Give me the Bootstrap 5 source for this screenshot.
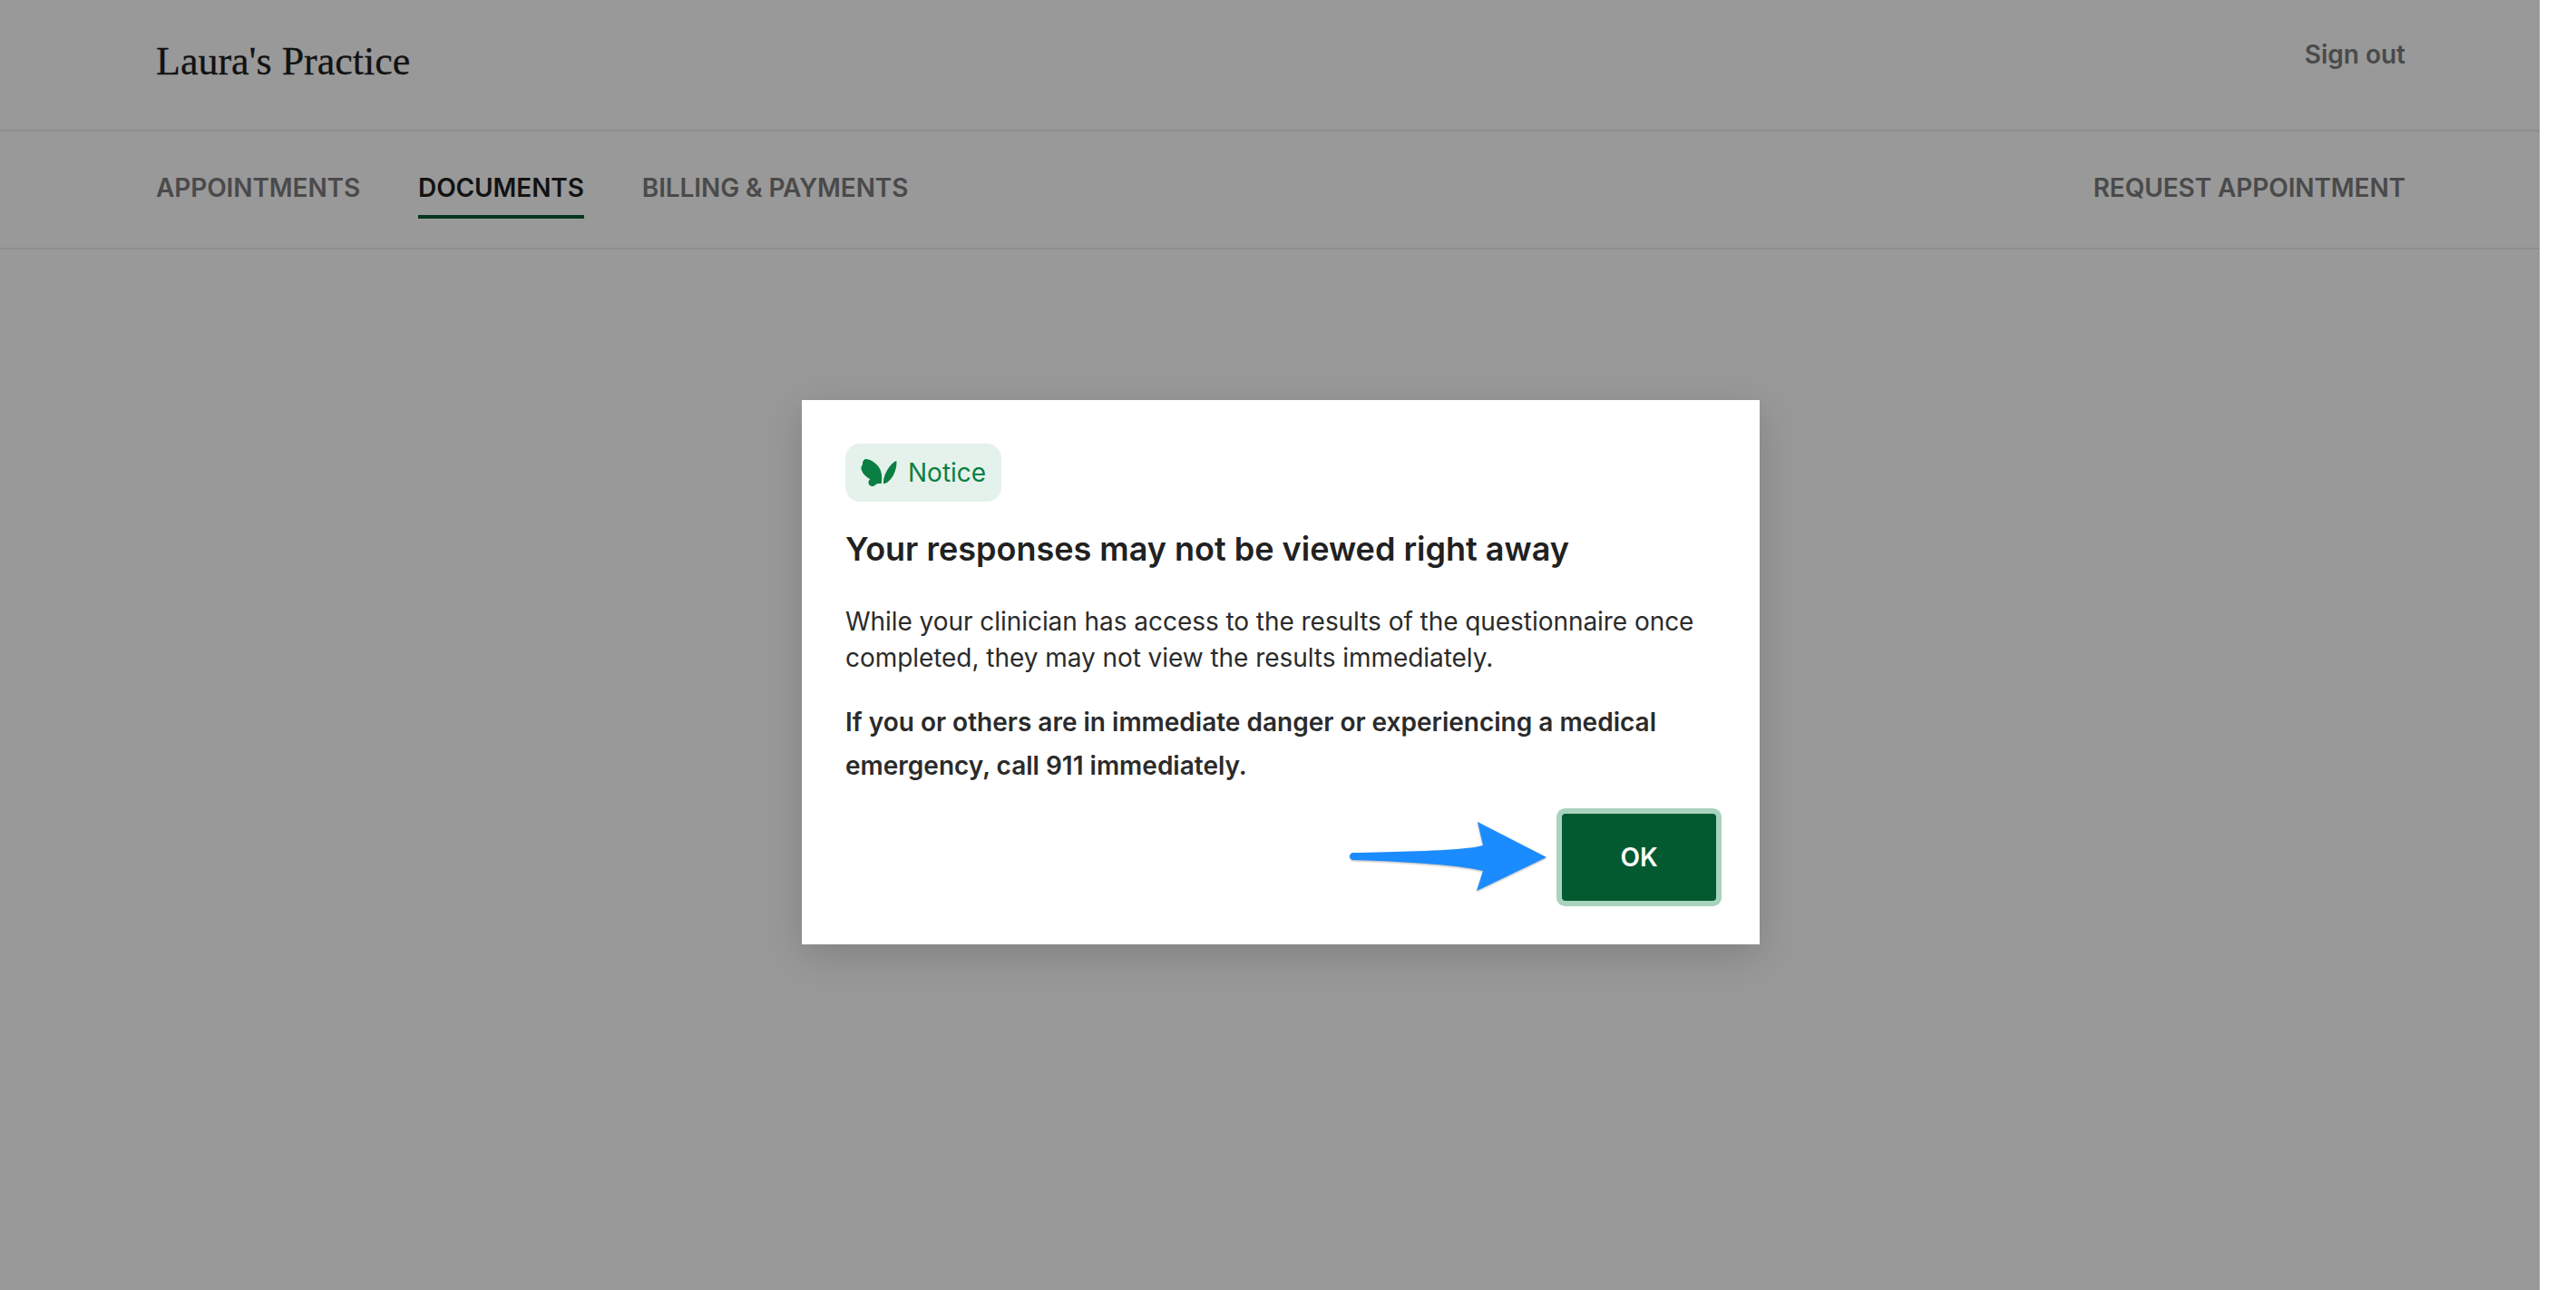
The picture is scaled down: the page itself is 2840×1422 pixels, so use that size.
<!DOCTYPE html>
<html lang="en"><head><meta charset="utf-8"><title>Documents</title>
<link href="https://cdn.jsdelivr.net/npm/bootstrap@5.3.0/dist/css/bootstrap.min.css" rel="stylesheet">
<style>
html,body{height:100%;background:#fff}
body{font-family:Inter,"Liberation Sans",sans-serif;color:#212121;overflow:hidden}
.page-shell{width:2800px;height:1422px;position:relative;background:#fff}
.top-bar{height:145px;border-bottom:2px solid #ededed;padding:0 148px 0 172px}
.brand-name{font-family:"Liberation Serif",serif;font-size:44px;line-height:1;color:#1f1f1f;margin-top:46px;-webkit-text-stroke:.3px #1f1f1f}
.sign-out{font-size:28px;font-weight:600;color:#7c7c7c;text-decoration:none;margin-top:43px;line-height:34px}
.tab-bar{height:130px;border-bottom:2px solid #ededed;padding:0 148px 0 172px}
.tab-link{font-size:28px;font-weight:600;color:#7c7c7c;text-decoration:none;line-height:34px;padding-top:45px;padding-bottom:13px;border-bottom:4px solid transparent;display:block;letter-spacing:-.1px}
.tab-link.is-current{color:#1f1f1f;border-bottom-color:#0a5c33}
.tab-gap{gap:64px}
.dim-layer{position:absolute;inset:0;background:rgba(0,0,0,.4);padding:441px 0 0 24px}
.notice-box{width:1056px;height:600px;background:#fff;border:0;border-radius:0;padding:48px 48px 0;margin:0 auto;box-shadow:0 12px 40px rgba(0,0,0,.16);position:relative;color:#212121}
.notice-chip{width:172px;height:64px;border-radius:16px;background:#e5f2eb;color:#0b7f43;font-size:28px;line-height:1;gap:12px;padding-left:17px}
.notice-title{font-size:36px;font-weight:600;line-height:44px;margin:30px 0 0;color:#212121}
.notice-body{font-size:28px;line-height:40px;margin:38px 0 0;color:#2b2b2b;letter-spacing:-.05px}
.notice-strong{font-size:28px;font-weight:600;line-height:48px;margin:27px 0 0;color:#2b2b2b}
.ok-btn{width:170px;height:96px;background:#035a30;border:0;border-radius:4px;color:#fff;font-size:28px;font-weight:600;box-shadow:0 0 0 6px #a8d3bd;position:absolute;left:838px;top:456px}
.ok-btn:hover{background:#035a30;color:#fff}
.hint-arrow{position:absolute;left:604px;top:462px;width:224px;height:84px;filter:drop-shadow(0 1px 1px rgba(0,0,0,.3))}
</style></head>
<body>
<div class="page-shell">
  <header class="top-bar d-flex justify-content-between align-items-start">
    <div class="brand-name">Laura's Practice</div>
    <a class="sign-out" href="#">Sign out</a>
  </header>
  <nav class="tab-bar d-flex justify-content-between align-items-start">
    <div class="d-flex tab-gap">
      <a class="tab-link" href="#">APPOINTMENTS</a>
      <a class="tab-link is-current" href="#">DOCUMENTS</a>
      <a class="tab-link" href="#">BILLING &amp; PAYMENTS</a>
    </div>
    <a class="tab-link" href="#">REQUEST APPOINTMENT</a>
  </nav>
  <div class="dim-layer">
    <div class="notice-box">
      <div class="notice-chip d-flex align-items-center">
        <svg width="40" height="30" viewBox="27 30 120 90" aria-hidden="true"><path fill="#0b7f43" d="M42 30C60 30 80 45 90 62C97 75 98 95 95 112C88 110 80 112 76 115C70 122 60 122 54 114C50 106 54 100 58 96C45 90 33 78 29 65C26 55 32 52 33 48C32 40 36 32 42 30Z"/><path fill="#0b7f43" d="M102 112C100 95 110 70 125 52C131 45 138 38 145 36C147 55 140 78 128 94C120 104 112 112 102 112Z"/></svg>
        <span>Notice</span>
      </div>
      <h2 class="notice-title">Your responses may not be viewed right away</h2>
      <p class="notice-body">While your clinician has access to the results of the questionnaire once completed, they may not view the results immediately.</p>
      <p class="notice-strong">If you or others are in immediate danger or experiencing a medical emergency, call 911 immediately.</p>
      <svg class="hint-arrow" viewBox="0 0 224 84" aria-hidden="true"><path fill="#1a8cff" d="M3 37C50 36 125 35 147 29L141 3L217 42L140 79L147 57C120 50 50 46 3 45C-1 43 -1 39 3 37Z"/></svg>
      <button class="ok-btn btn" type="button">OK</button>
    </div>
  </div>
</div>
</body></html>
